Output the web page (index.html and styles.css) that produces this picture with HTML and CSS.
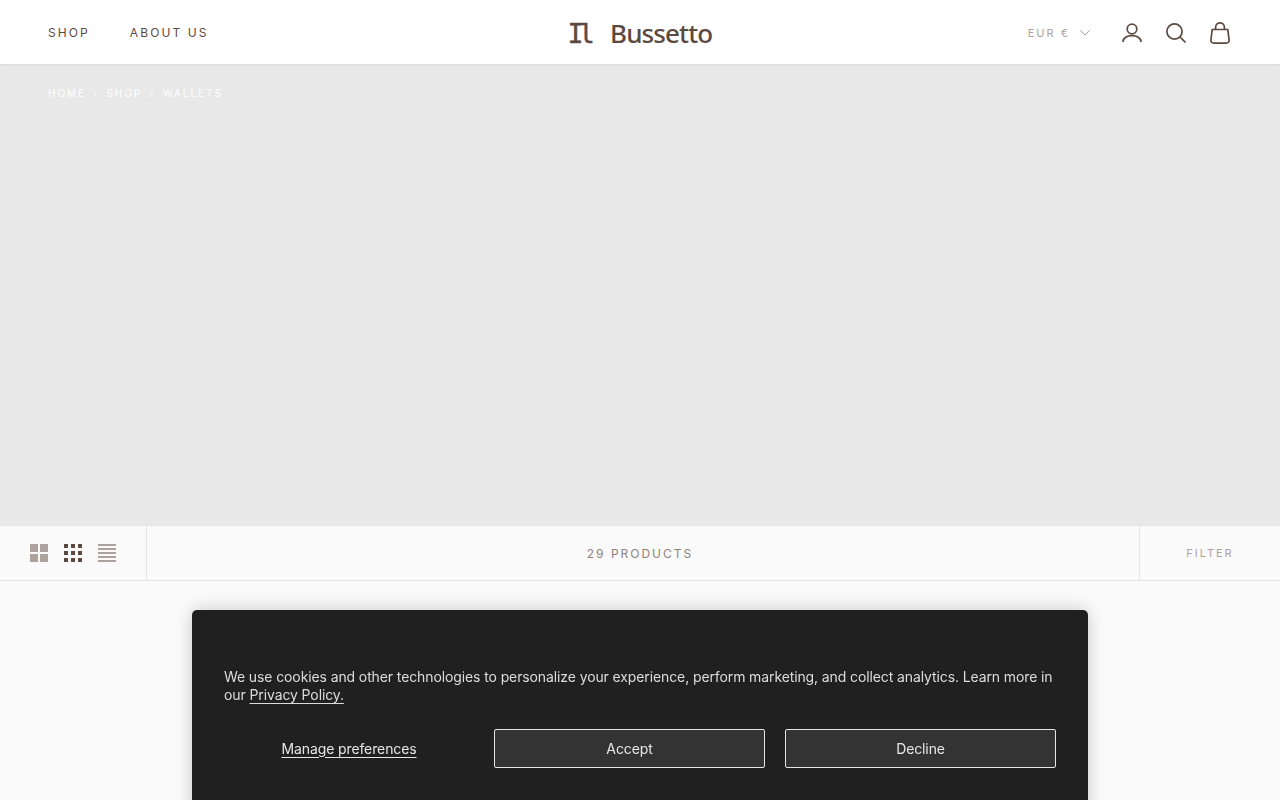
FILE: index.html
```html
<!DOCTYPE html>
<html lang="en">

<head>
    <meta charset="UTF-8">
    <meta name="viewport" content="width=device-width, initial-scale=1.0">
    <title>Wallets - Il Bussetto</title>
    <link rel="stylesheet" href="styles.css">
</head>

<body>
    <header class="site-header">
        <nav class="main-nav">
            <a href="#">SHOP</a>
            <a href="#">ABOUT US</a>
        </nav>
        <a href="#" class="logo"><span class="logo-il">Il</span><span>Bussetto</span></a>
        <div class="header-tools">
            <button class="currency">EUR €
                <svg width="10" height="6" viewBox="0 0 10 6"><path d="M.5.5 5 5 9.500.5" fill="none" stroke="currentColor"/></svg>
            </button>
            <a href="#" class="tool-icon">
                <svg width="20" height="20" viewBox="0 0 20 20" fill="none" stroke="currentColor" stroke-width="1.7"><circle cx="10" cy="6" r="4.800"/><path d="M.8 19c.7-4 4.200-6.300 9.200-6.300s8.500 2.300 9.200 6.300"/></svg>
            </a>
            <a href="#" class="tool-icon">
                <svg width="20" height="20" viewBox="0 0 20 20" fill="none" stroke="currentColor" stroke-width="1.7"><circle cx="8.500" cy="8.500" r="7.600"/><path d="m14 14 5.500 5.500"/></svg>
            </a>
            <a href="#" class="tool-icon">
                <svg width="20" height="22" viewBox="0 0 20 22" fill="none" stroke="currentColor" stroke-width="1.7"><path d="M2.200 7.500h15.600l1.300 10.500c.2 1.800-1 3.100-2.800 3.100H3.700C1.900 21.100.700 19.800.900 18Z"/><path d="M5.600 7.500V5.200a4.400 4.400 0 0 1 8.800 0v2.300"/></svg>
            </a>
        </div>
    </header>

    <section class="hero">
        <ol class="breadcrumb">
            <li>HOME</li>
            <li class="sep">/</li>
            <li>SHOP</li>
            <li class="sep">/</li>
            <li>WALLETS</li>
        </ol>
    </section>

    <div class="toolbar">
        <div class="view-modes">
            <span class="grid-2"><i></i><i></i><i></i><i></i></span>
            <span class="grid-3"><i></i><i></i><i></i><i></i><i></i><i></i><i></i><i></i><i></i></span>
            <span class="grid-list"><i></i><i></i><i></i><i></i><i></i></span>
        </div>
        <div class="product-count">29 PRODUCTS</div>
        <button class="filter-btn">FILTER</button>
    </div>

    <div class="cookie-banner">
        <p>We use cookies and other technologies to personalize your experience, perform marketing, and collect analytics. Learn more in our <a href="#">Privacy Policy.</a></p>
        <div class="cookie-actions">
            <a href="#" class="manage">Manage preferences</a>
            <button class="cookie-btn">Accept</button>
            <button class="cookie-btn">Decline</button>
        </div>
    </div>
</body>

</html>
```

FILE: styles.css
```css
* {
    box-sizing: border-box;
}

html,
body {
    height: 800px;
    overflow: hidden;
}

body {
    margin: 0;
    font-family: Inter, "Liberation Sans", Arial, sans-serif;
    background: #fafafa;
    color: #5c4a42;
}

a {
    color: inherit;
    text-decoration: none;
}

button {
    font-family: inherit;
    background: none;
    border: 0;
    padding: 0;
}

/* Header */
.site-header {
    height: 64px;
    padding: 0 48px;
    background: #fff;
    display: grid;
    grid-template-columns: 1fr auto 1fr;
    align-items: center;
    position: relative;
    box-shadow: 0 1px 2px rgba(0, 0, 0, 0.06);
}

.main-nav {
    display: flex;
    gap: 40px;
    font-size: 12px;
    letter-spacing: 2.1px;
}

.logo {
    display: flex;
    align-items: baseline;
    gap: 20px;
    margin-top: 2px;
    font-family: "Noto Sans", sans-serif;
    font-weight: 500;
    font-size: 26px;
    letter-spacing: -0.9px;
    color: #5c4a42;
}

.logo-il {
    font-family: "DejaVu Sans Mono", monospace;
    font-weight: 400;
    font-size: 26px;
    letter-spacing: -4.5px;
    -webkit-text-stroke: 0.5px #5c4a42;
}

.header-tools {
    display: flex;
    justify-content: flex-end;
    align-items: center;
    gap: 24px;
    margin-right: 2px;
    padding-top: 2px;
}

.currency {
    display: flex;
    align-items: center;
    gap: 10px;
    margin-right: 8px;
    color: #ada29e;
    font-size: 11px;
    letter-spacing: 2px;
}

.tool-icon {
    display: flex;
}

/* Hero */
.hero {
    height: 461px;
    padding: 23px 48px;
    background: #e8e8e8;
}

.breadcrumb {
    list-style: none;
    margin: 0;
    padding: 0;
    display: flex;
    gap: 7.5px;
    font-size: 10px;
    letter-spacing: 1.95px;
    color: #fff;
}

.breadcrumb .sep {
    opacity: 0.7;
}

/* Toolbar */
.toolbar {
    height: 56px;
    display: flex;
    align-items: stretch;
    border-top: 1px solid #e4e4e4;
    border-bottom: 1px solid #e4e4e4;
}

.view-modes {
    width: 147px;
    padding-left: 30px;
    display: flex;
    align-items: center;
    gap: 16px;
    border-right: 1px solid #e4e4e4;
}

.view-modes span {
    width: 18px;
    height: 18px;
    display: grid;
}

.view-modes i {
    display: block;
    background: #ada29e;
}

.grid-2 {
    grid-template-columns: 8px 8px;
    grid-template-rows: 8px 8px;
    gap: 2px;
}

.grid-3 {
    grid-template-columns: repeat(3, 4px);
    grid-template-rows: repeat(3, 4px);
    gap: 3px;
}

.view-modes .grid-3 i {
    background: #5c4a42;
}

.grid-list {
    grid-template-rows: repeat(5, 2px);
    gap: 2px;
}

.product-count {
    flex: 1;
    padding-right: 6px;
    display: flex;
    align-items: center;
    justify-content: center;
    font-size: 12px;
    letter-spacing: 2px;
    color: #8f827c;
}

.filter-btn {
    width: 141px;
    border-left: 1px solid #e4e4e4;
    font-size: 11px;
    letter-spacing: 2px;
    color: #ada29e;
}

/* Cookie banner */
.cookie-banner {
    position: fixed;
    top: 610px;
    left: 192px;
    width: 896px;
    height: 230px;
    padding: 58px 32px 32px;
    background: #202020;
    border-radius: 5px;
    box-shadow: 0 0 18px rgba(0, 0, 0, 0.2);
    color: #dcdcdc;
    font-size: 14px;
    line-height: 18px;
    letter-spacing: -0.11px;
}

.cookie-banner p {
    margin: 0 0 25px;
}

.cookie-banner a {
    text-decoration: underline;
    text-underline-offset: 3px;
}

.cookie-actions {
    display: grid;
    grid-template-columns: 250px 271px 271px;
    gap: 20px;
    align-items: center;
}

.manage {
    text-align: center;
    color: #e6e6e6;
}

.cookie-btn {
    height: 39px;
    background: #333;
    border: 1px solid #e6e6e6;
    border-radius: 2px;
    color: #e6e6e6;
    font-size: 14px;
    letter-spacing: -0.11px;
}
```
